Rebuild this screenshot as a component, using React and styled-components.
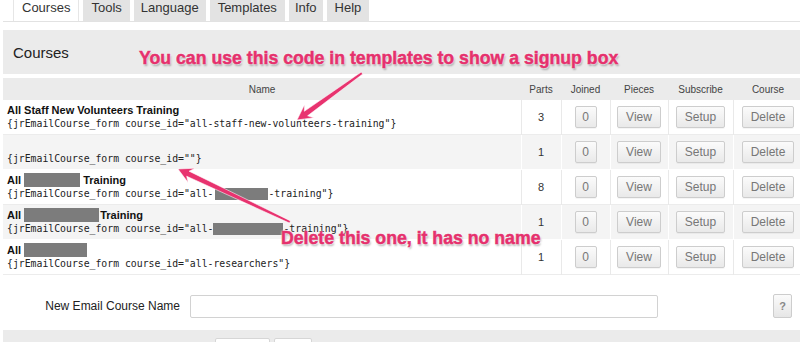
import React from "react";
import styled, { createGlobalStyle } from "styled-components";

const Global = createGlobalStyle`
  html, body { margin: 0; padding: 0; background: #fff; }
  body { font-family: "Liberation Sans", Arial, sans-serif; color: #222; }
`;

const Page = styled.div`
  position: relative;
  width: 800px;
  height: 342px;
  overflow: hidden;
  padding-left: 3px;
  box-sizing: border-box;
`;

const TabBar = styled.div`
  display: flex;
  gap: 4px;
  margin-top: -6px;
  padding-left: 10px;
  width: 900px;
  border-bottom: 1px solid #e2e2e2;
`;

const Tab = styled.div`
  height: 26px;
  line-height: 26px;
  padding: 0 ${(p) => p.$pad || 7}px;
  font-size: 13px;
  color: #333;
  background: ${(p) => (p.$active ? "#fff" : "#e3e3e3")};
  border: 1px solid ${(p) => (p.$active ? "#e6e6e6" : "#e3e3e3")};
  border-bottom: none;
  margin-bottom: ${(p) => (p.$active ? "-1px" : "0")};
  border-radius: 2px 2px 0 0;
`;

const SectionHeader = styled.div`
  margin-top: 8px;
  height: 44px;
  width: 900px;
  background: #ebebeb;
  display: flex;
  align-items: center;
  padding-left: 10px;
  font-size: 15px;
  color: #222;
  box-sizing: border-box;
`;

const Table = styled.table`
  margin-top: 4px;
  width: 800px;
  border-collapse: collapse;
  table-layout: fixed;
`;

const HeadCell = styled.th`
  height: 22px;
  padding: 0;
  background: #ebebeb;
  font-weight: normal;
  font-size: 10px;
  color: #444;
  text-align: center;
`;

const Row = styled.tr`
  background: ${(p) => (p.$alt ? "#f4f4f4" : "#fff")};
  border-bottom: 1px solid ${(p) => (p.$alt ? "#fff" : "#ececec")};
`;

const Cell = styled.td`
  height: 34px;
  padding: 0;
  text-align: center;
  vertical-align: middle;
  font-size: 11px;
  color: #333;
  border-right: 1px solid ${(p) => (p.$alt ? "#fff" : "#e9e9e9")};
`;

const NameCell = styled.td`
  height: 34px;
  padding: 0 4px;
  vertical-align: middle;
  border-right: 1px solid ${(p) => (p.$alt ? "#fff" : "#e9e9e9")};
  white-space: nowrap;
  overflow: hidden;
`;

const CourseTitle = styled.div`
  font-weight: bold;
  font-size: 11px;
  line-height: 14px;
  height: 14px;
  color: #111;
  display: flex;
  align-items: center;
`;

const Code = styled.div`
  font-family: "DejaVu Sans Mono", "Liberation Mono", monospace;
  font-size: 9.8px;
  line-height: 14px;
  color: #222;
  display: flex;
  align-items: center;
`;

const Redact = styled.span`
  display: inline-block;
  width: ${(p) => p.$w}px;
  height: ${(p) => p.$h || 14}px;
  margin-left: ${(p) => p.$ml || 0}px;
  margin-right: ${(p) => p.$mr || 0}px;
  background: #7c7c7c;
`;

const Btn = styled.button`
  height: 22px;
  min-width: ${(p) => p.$min || 0}px;
  padding: 0 ${(p) => (p.$narrow ? 6 : 8)}px;
  font-family: "Liberation Sans", Arial, sans-serif;
  font-size: 12px;
  color: #777;
  background: linear-gradient(#fbfbfb, #e9e9e9);
  border: 1px solid #cdcdcd;
  border-radius: 2px;
  box-shadow: 0 1px 0 rgba(0, 0, 0, 0.04);
  cursor: pointer;
`;

const FormRow = styled.div`
  margin-top: 18px;
  display: flex;
  align-items: center;
  height: 26px;
`;

const FormLabel = styled.label`
  width: 177px;
  text-align: right;
  font-size: 12px;
  color: #222;
`;

const TextInput = styled.input`
  margin-left: 10px;
  width: 468px;
  height: 23px;
  box-sizing: border-box;
  border: 1px solid #d2d2d2;
  border-radius: 2px;
  background: #fff;
`;

const HelpBtn = styled.button`
  margin-left: auto;
  margin-right: 8px;
  width: 19px;
  height: 24px;
  padding: 0;
  font-family: "Liberation Sans", Arial, sans-serif;
  font-size: 11px;
  font-weight: bold;
  color: #888;
  background: linear-gradient(#fbfbfb, #e6e6e6);
  border: 1px solid #cdcdcd;
  border-radius: 2px;
`;

const BottomBar = styled.div`
  margin-top: 11px;
  height: 30px;
  width: 900px;
  background: #ebebeb;
  display: flex;
  padding-left: 212px;
  padding-top: 8px;
  gap: 4px;
  box-sizing: border-box;
`;

const BarBtn = styled.div`
  width: ${(p) => p.$w}px;
  height: 22px;
  background: #fff;
  border: 1px solid #d6d6d6;
  border-radius: 2px;
`;

const Note = styled.div`
  position: absolute;
  left: ${(p) => p.$x}px;
  top: ${(p) => p.$y}px;
  font-size: 17.7px;
  line-height: 18px;
  font-weight: bold;
  color: #e5316d;
  white-space: nowrap;
  -webkit-text-stroke: 0.5px #e5316d;
  text-shadow: 0 0 2px #fff, 0 0 2px #fff, 1px 2px 2px rgba(0, 0, 0, 0.3);
  pointer-events: none;
`;

const Overlay = styled.svg`
  position: absolute;
  left: 0;
  top: 0;
  pointer-events: none;
`;

function arrowPoints(tx, ty, px, py) {
  const dx = px - tx;
  const dy = py - ty;
  const len = Math.hypot(dx, dy);
  const ux = dx / len;
  const uy = dy / len;
  const nx = -uy;
  const ny = ux;
  const L = 15;
  const bx = px - ux * L;
  const by = py - uy * L;
  const cx = px - ux * (L - 4);
  const cy = py - uy * (L - 4);
  const pts = [
    [tx + nx * 1.2, ty + ny * 1.2],
    [cx + nx * 2.8, cy + ny * 2.8],
    [bx + nx * 8, by + ny * 8],
    [px, py],
    [bx - nx * 8, by - ny * 8],
    [cx - nx * 2.8, cy - ny * 2.8],
    [tx - nx * 1.2, ty - ny * 1.2],
  ];
  return pts.map((p) => p.map((v) => v.toFixed(1)).join(",")).join(" ");
}

const courses = [
  {
    title: <>All Staff New Volunteers Training</>,
    code: <>{'{jrEmailCourse_form course_id="all-staff-new-volunteers-training"}'}</>,
    parts: 3,
  },
  {
    title: null,
    code: <>{'{jrEmailCourse_form course_id=""}'}</>,
    parts: 1,
  },
  {
    title: (
      <>
        All&nbsp;<Redact $w={56} />&nbsp;Training
      </>
    ),
    code: (
      <>
        {'{jrEmailCourse_form course_id="all-'}
        <Redact $w={53} $h={12} $ml={2} />
        {'-training"}'}
      </>
    ),
    parts: 8,
  },
  {
    title: (
      <>
        All&nbsp;<Redact $w={75} $mr={1} />Training
      </>
    ),
    code: (
      <>
        {'{jrEmailCourse_form course_id="all-'}
        <Redact $w={70} $h={12} />
        {'-training"}'}
      </>
    ),
    parts: 1,
  },
  {
    title: (
      <>
        All&nbsp;<Redact $w={63} />
      </>
    ),
    code: <>{'{jrEmailCourse_form course_id="all-researchers"}'}</>,
    parts: 1,
  },
];

export default function App() {
  return (
    <>
      <Global />
      <Page>
        <TabBar>
          <Tab $active $pad={8}>Courses</Tab>
          <Tab>Tools</Tab>
          <Tab $pad={6}>Language</Tab>
          <Tab>Templates</Tab>
          <Tab $pad={5}>Info</Tab>
          <Tab $pad={7}>Help</Tab>
        </TabBar>
        <SectionHeader>Courses</SectionHeader>
        <Table>
          <colgroup>
            <col style={{ width: 518 }} />
            <col style={{ width: 40 }} />
            <col style={{ width: 49 }} />
            <col style={{ width: 58 }} />
            <col style={{ width: 65 }} />
            <col style={{ width: 70 }} />
          </colgroup>
          <thead>
            <tr>
              <HeadCell>Name</HeadCell>
              <HeadCell>Parts</HeadCell>
              <HeadCell>Joined</HeadCell>
              <HeadCell>Pieces</HeadCell>
              <HeadCell>Subscribe</HeadCell>
              <HeadCell>Course</HeadCell>
            </tr>
          </thead>
          <tbody>
            {courses.map((c, i) => {
              const alt = i % 2 === 1;
              return (
                <Row key={i} $alt={alt}>
                  <NameCell $alt={alt}>
                    <CourseTitle>{c.title}</CourseTitle>
                    <Code>{c.code}</Code>
                  </NameCell>
                  <Cell $alt={alt}>{c.parts}</Cell>
                  <Cell $alt={alt}>
                    <Btn $min={22} $narrow>0</Btn>
                  </Cell>
                  <Cell $alt={alt}>
                    <Btn>View</Btn>
                  </Cell>
                  <Cell $alt={alt}>
                    <Btn>Setup</Btn>
                  </Cell>
                  <Cell $alt={alt}>
                    <Btn>Delete</Btn>
                  </Cell>
                </Row>
              );
            })}
          </tbody>
        </Table>
        <FormRow>
          <FormLabel>New Email Course Name</FormLabel>
          <TextInput type="text" />
          <HelpBtn>?</HelpBtn>
        </FormRow>
        <BottomBar>
          <BarBtn $w={53} />
          <BarBtn $w={36} />
        </BottomBar>

        <Overlay width="800" height="342" viewBox="0 0 800 342">
          <g fill="#e8336f" stroke="rgba(255,255,255,0.7)" strokeWidth="0.8">
            <polygon points={arrowPoints(362, 73, 297, 120)} />
            <polygon points={arrowPoints(290, 222, 178, 169)} />
          </g>
        </Overlay>
        <Note $x={139} $y={49}>
          You can use this code in templates to show a signup box
        </Note>
        <Note $x={281} $y={229}>
          Delete this one, it has no name
        </Note>
      </Page>
    </>
  );
}
